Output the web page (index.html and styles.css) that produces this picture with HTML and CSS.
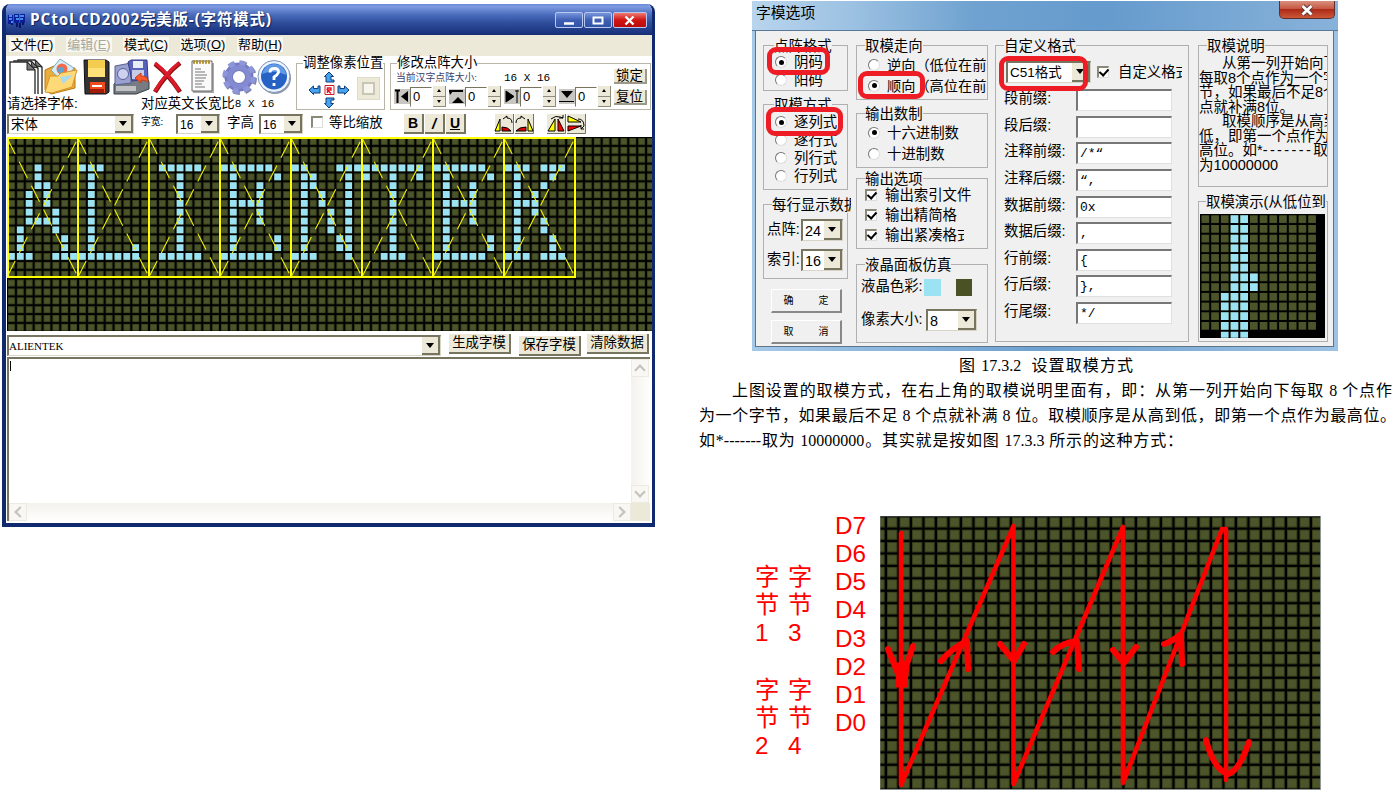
FILE: index.html
```html
<!DOCTYPE html>
<html lang="zh-CN">
<head>
<meta charset="utf-8">
<title>PCtoLCD2002 字模设置</title>
<link rel="stylesheet" href="styles.css">
</head>
<body>
<main class="page">

<section class="app">
  <header class="app-title">
    <svg class="app-logo" width="18" height="16" viewBox="0 0 18 16"><path d="M0 3h5v9H0zM6 2h5v9H6zM12 2h5v9h-5z" fill="#0a1f9c"/><path d="M1 4h3M1 7h3M3 10h2M7 4h3M8 7h3M12 4h4M12 7h3" stroke="#5fb0ff" stroke-width="1.3"/><path d="M3 12h2M9 11v4M12 11v5M15 10v3" stroke="#0b1566" stroke-width="2"/></svg>
    <h1>PCtoLCD2002完美版-(字符模式)</h1>
    <div class="caption-buttons">
      <span class="cap"><svg width="28" height="15" viewBox="0 0 28 15"><path d="M9 10.5h10" stroke="#fff" stroke-width="2.4"/></svg></span>
      <span class="cap"><svg width="28" height="15" viewBox="0 0 28 15"><path d="M9.5 4.5h9v6h-9z" fill="none" stroke="#fff" stroke-width="2"/></svg></span>
      <span class="cap cap-close"><svg width="33" height="15" viewBox="0 0 33 15"><path d="M12.500 3.500l8 8M20.500 3.500l-8 8" stroke="#fff" stroke-width="2.4"/></svg></span>
    </div>
  </header>
  <nav class="menu">
    <span>文件(<u>F</u>)</span><span class="off">编辑(<u>E</u>)</span><span>模式(<u>C</u>)</span><span>选项(<u>O</u>)</span><span>帮助(<u>H</u>)</span>
  </nav>

  <div class="toolbar">
    <div class="upper">
      <div class="left-tools">
        <div class="icons">
          <svg class="i-docs" width="34" height="38" viewBox="0 0 34 38"><g fill="#fff" stroke="#333" stroke-width="1.400"><path d="M9 36V2h17l7 7v27"/><path d="M5 36V3h17l7 7v26"/><path d="M1 36V4h17l8 8v24"/></g><path d="M18 4v8h8zM22 3l1 6 6 1zM26 2l1 6 6 1z" fill="#777" stroke="#222"/></svg>
          <svg class="i-folder" width="36" height="38" viewBox="0 0 36 38"><path d="M2 12l9-4 3 4 18-2v20L8 36 2 32z" fill="#e9ad3b" stroke="#b87813"/><path d="M17 1l14 9-11 15L8 12z" fill="#d6edf7" stroke="#82a9b8"/><circle cx="19" cy="11" r="5.500" fill="#f26b4d"/><circle cx="18" cy="12" r="3" fill="#58a6d4"/><path d="M2 34L7 18h8l3-3 16-3-5 17-20 6z" fill="#ffd977" stroke="#d5972a"/><path d="M17 19l13-2-10 9z" fill="#a9dbed"/></svg>
          <svg class="i-floppy" width="27" height="38" viewBox="0 0 27 38"><path d="M1 2h22l3 2v30l-3 2H2z" fill="#333" stroke="#111"/><path d="M5 2h17v17H5z" fill="#f4cd4e"/><path d="M5 10h17v9H5z" fill="#ffe17a"/><path d="M7 24h15v11H7z" fill="#f04a1f"/><path d="M9 27h10v2H9z" fill="#fff"/><path d="M7 31h14v4H7z" fill="#a31b08"/></svg>
          <svg class="i-drive" width="37" height="38" viewBox="0 0 37 38"><path d="M1 26l7-7h26l2 5v7l-13 5H1z" fill="#777b82" stroke="#363a42"/><path d="M2 8l16-3v20L2 27z" fill="#9aa1ce" stroke="#596090"/><circle cx="10" cy="16" r="5.500" fill="#cdd1ed" stroke="#5b619e"/><path d="M15 4l3-2h16l1 19-16 2z" fill="#5963bc" stroke="#353d89"/><path d="M20 3h10v7H20z" fill="#e8ecf7"/><path d="M19 12h12v9H19z" fill="#c7cbe7"/><path d="M3 28h20v5H3z" fill="#c0c2c3"/><path d="M35 24c0-5-3-6-7-6v-3l-6 5 6 5v-3q4 0 7 2" fill="#ff5a2d" stroke="#c33c18"/></svg>
          <svg class="i-x" width="31" height="38" viewBox="0 0 31 38"><path d="M3 6Q17 17 28 34M28 5Q14 16 3 34" fill="none" stroke="#8f1010" stroke-width="4.600"/><path d="M3 5Q17 16 27 33M27 5Q13 16 3 33" fill="none" stroke="#dd1a2b" stroke-width="3.400"/></svg>
          <svg class="i-note" width="24" height="38" viewBox="0 0 24 38"><path d="M2 5h21v30H2z" fill="#aaa"/><path d="M1 3h20v30H1z" fill="#fafafa" stroke="#666"/><path d="M2 4h18" stroke="#b28f31" stroke-width="3.500" stroke-dasharray="2 1"/><path d="M4 11h6M4 14h10M4 17h12M4 20h11M4 23h9M4 26h7M4 29h10" stroke="#777"/></svg>
          <svg class="i-gear" width="36" height="38" viewBox="0 0 36 38"><g transform="translate(18 19)"><circle cx="1" cy="1" r="13.500" fill="none" stroke="#8185a4" stroke-width="7" stroke-dasharray="5.600 5"/><circle r="10.300" fill="none" stroke="#747ac2" stroke-width="8.500"/><circle r="13" fill="none" stroke="#8e96da" stroke-width="7.500" stroke-dasharray="5.600 4.610"/><circle r="9.500" fill="none" stroke="#858bd0" stroke-width="5"/></g></svg>
          <svg class="i-help" width="35" height="38" viewBox="0 0 35 38"><circle cx="18" cy="20" r="16" fill="#8d96a7"/><circle cx="17" cy="18.500" r="16" fill="#eef4ff" stroke="#7e95bc"/><circle cx="17" cy="18.500" r="13" fill="#2562c4"/><path d="M5 16Q8 5 18 6t11 11Q17 11 5 16" fill="#6299e4"/><path d="M13 14.500q0-4 4.500-4t4 4q-1 2.500-4.500 4.500v3M17 25v3" fill="none" stroke="#fff" stroke-width="2.800"/></svg>
        </div>
        <div class="labels"><span class="lab-font">请选择字体:</span><span>对应英文长宽比</span><span class="mono">8 X 16</span></div>
      </div>

      <div class="group shift">
        <div class="legend">调整像素位置</div>
        <div class="shift-row">
          <svg width="42" height="38" viewBox="0 0 42 38"><g fill="#46a3ee" stroke="#113c79"><path d="M21 1l4.500 4.500H23V9h3v2h-8V5.500h-1.500z"/><path d="M1 19l4.500-4v2.500H10V15h2v7H5.500v1.500z"/><path d="M41 19l-4.500-4v2.500H32V15h-2v7h6.500v1.500z"/><path d="M21 37l4.500-4.500H23V29h3v-2h-8v5.500h-1.500z"/></g><path d="M17 14.500h9v9h-9z" fill="#fff" stroke="#cc1c24"/><path d="M19.500 22v-5h3.500v2h-3.500l3.500 3.500" fill="none" stroke="#e31525" stroke-width="1.400"/></svg>
          <span class="pad"><i></i></span>
        </div>
      </div>

      <div class="group resize">
        <div class="legend">修改点阵大小</div>
        <div class="resize-body">
          <div class="resize-left">
            <div class="size-info"><span class="tiny">当前汉字点阵大小:</span><span class="mono">16 X 16</span></div>
            <div class="steppers">
              <div class="step"><svg width="16" height="15" viewBox="0 0 16 15"><path d="M0 0h16v15H0z" fill="#c8c6c0"/><path d="M1 1.500h5M3.500 1v13" stroke="#000" stroke-width="2"/><path d="M14 2v11L7 7.500z"/></svg><b>0</b><em class="spin"><i></i><i></i></em></div>
              <div class="step"><svg width="16" height="15" viewBox="0 0 16 15"><path d="M0 0h16v15H0z" fill="#c8c6c0"/><path d="M0 2h14" stroke="#000" stroke-width="2"/><path d="M3 14h12L9 8zM0 2h4L1 6z"/></svg><b>0</b><em class="spin"><i></i><i></i></em></div>
              <div class="step"><svg width="16" height="15" viewBox="0 0 16 15"><path d="M0 0h16v15H0z" fill="#c8c6c0"/><path d="M2 2v11l8-5.500zM11 2h4M13 1v13" stroke="#000"/></svg><b>0</b><em class="spin"><i></i><i></i></em></div>
              <div class="step"><svg width="16" height="15" viewBox="0 0 16 15"><path d="M0 0h16v15H0z" fill="#c8c6c0"/><path d="M2 2h12L8 9z"/><path d="M0 12.500h15" stroke="#000"/></svg><b>0</b><em class="spin"><i></i><i></i></em></div>
            </div>
          </div>
          <div class="resize-btns"><span class="btn">锁定</span><span class="btn">复位</span></div>
        </div>
      </div>
    </div>

    <div class="lower">
      <span class="combo font-combo"><span>宋体</span><i class="drop"></i></span>
      <span class="tiny dark w-lab">字宽:</span>
      <span class="combo num-combo"><span>16</span><i class="drop"></i></span>
      <span class="h-lab">字高</span>
      <span class="combo num-combo"><span>16</span><i class="drop"></i></span>
      <span class="check"></span>
      <span class="scale-lab">等比缩放</span>
      <span class="btn sq bold">B</span><span class="btn sq ital">/</span><span class="btn sq under">U</span>
      <svg class="flip" width="92" height="20" viewBox="0 0 92 20">
        <path d="M0 0h92v20H0z" fill="#fff"/><path d="M1 0h18v19H1zM21 0h18v19H21zM53 0h18v19H53zM73 0h18v19H73z" fill="#ece9d8"/>
        <path d="M19.500 0v19.500H1M39.500 0v19.500H21M71.500 0v19.500H53M91.500 0v19.500H73" fill="none" stroke="#77745f"/>
        <g stroke="#000"><path d="M1 17L6 5v12z" fill="#ff0"/><path d="M8 13q6 0 9 4H8z" fill="#d00"/><path d="M9 5l4-3v2q5 0 5 5" fill="none"/>
        <path d="M39 17L34 5v12z" fill="#ff0"/><path d="M32 13q-7 0-10 4h10z" fill="#d00"/><path d="M31 5l-4-3v2q-5 0-5 5" fill="none"/>
        <path d="M54 17l7-12v12z" fill="#ff0"/><path d="M64 5v12h6z" fill="#f00"/><path d="M57 5q5-4 9-2l3 1M69 1v3h-4" fill="none"/>
        <path d="M74 2v6h13z" fill="#ff0"/><path d="M74 17l13-5H74z" fill="#f00"/><path d="M84 5q6 0 6 7l-3 3M90 15h-3v-4" fill="none"/></g>
      </svg>
    </div>
  </div>

  <svg class="matrix" width="645" height="194" viewBox="0 0 645 194">
    <defs><pattern id="dots" x="1" y="1" width="8.875" height="8.850" patternUnits="userSpaceOnUse"><path d="M0 0h8.875v8.850H0z" fill="#000"/><path d="M0 0h7v7H0z" fill="#353d1b"/><path d="M.8.800h5.400v5.400H.8z" fill="#4c552a"/></pattern></defs>
    <path d="M0 0h645v194H0z" fill="url(#dots)"/>
    <path id="glyph-pixels" fill="#9be2f2"/>
    <path id="glyph-diagonals" fill="none" stroke="#f0f000" stroke-width="1.100" stroke-dasharray="18 8.800"/>
    <path id="glyph-frames" fill="none" stroke="#ff0" stroke-width="2"/>
  </svg>

  <div class="entry">
    <span class="combo text-combo"><span class="entry-text">ALIENTEK</span><i class="drop"></i></span>
    <span class="btn gen">生成字模</span><span class="btn save">保存字模</span><span class="btn clear">清除数据</span>
  </div>
  <div class="output">
    <div class="output-text"><span class="caret"></span></div>
    <div class="vbar"><span class="sb up"></span><span class="sb down"></span></div>
    <div class="hbar"><span class="sb prev"></span><span class="sb next"></span></div>
    <div class="corner"></div>
  </div>
</section>

<section class="doc">
  <div class="dialog">
    <header class="dlg-title"><h2>字模选项</h2><span class="dlg-close"><svg width="14" height="12" viewBox="0 0 14 12"><path d="M2.500 2l9 8.500M11.500 2l-9 8.500" stroke="#5b3a3a" stroke-width="4.600"/><path d="M2.500 2l9 8.500M11.500 2l-9 8.500" stroke="#fff" stroke-width="2.800"/></svg></span></header>
    <div class="dlg-body">
      <div class="col c1">
        <div class="group g-format"><div class="legend">点阵格式</div>
          <label><i class="radio on"></i>阴码</label><label><i class="radio"></i>阳码</label><span class="mark m1"></span></div>
        <div class="group g-mode"><div class="legend">取模方式</div>
          <label><i class="radio on"></i>逐列式</label><label><i class="radio"></i>逐行式</label><label><i class="radio"></i>列行式</label><label><i class="radio"></i>行列式</label><span class="mark m2"></span></div>
        <div class="group g-line"><div class="legend">每行显示数据</div>
          <div class="pair"><span>点阵:</span><span class="combo"><span>24</span><i class="drop"></i></span></div>
          <div class="pair"><span>索引:</span><span class="combo"><span>16</span><i class="drop"></i></span></div></div>
        <div class="dbtn">确<span>定</span></div>
        <div class="dbtn">取<span>消</span></div>
      </div>
      <div class="col c2">
        <div class="group g-dir"><div class="legend">取模走向</div>
          <label><i class="radio"></i>逆向（低位在前</label><label><i class="radio on"></i>顺向（高位在前</label><span class="mark m3"></span></div>
        <div class="group g-base"><div class="legend">输出数制</div>
          <label><i class="radio on"></i>十六进制数</label><label><i class="radio"></i>十进制数</label></div>
        <div class="group g-opt"><div class="legend">输出选项</div>
          <label><i class="check on"></i>输出索引文件</label><label><i class="check on"></i>输出精简格</label><label><i class="check on"></i><span class="clip">输出紧凑格式</span></label></div>
        <div class="group g-lcd"><div class="legend">液晶面板仿真</div>
          <div class="lcd-row"><span>液晶色彩:</span><i class="swatch sky"></i><i class="swatch olive"></i></div>
          <div class="lcd-row"><span>像素大小:</span><span class="combo"><span>8</span><i class="drop"></i></span></div></div>
      </div>
      <div class="col c3">
        <div class="group g-custom"><div class="legend">自定义格式</div>
          <div class="custom-top"><span class="combo"><span>C51格式</span><i class="drop"></i></span><i class="check on"></i><span class="clip">自定义格式</span></div>
          <div class="field"><span>段前缀:</span><b></b></div>
          <div class="field"><span>段后缀:</span><b></b></div>
          <div class="field"><span>注释前缀:</span><b>/*“</b></div>
          <div class="field"><span>注释后缀:</span><b>“,</b></div>
          <div class="field"><span>数据前缀:</span><b>0x</b></div>
          <div class="field"><span>数据后缀:</span><b>,</b></div>
          <div class="field"><span>行前缀:</span><b>{</b></div>
          <div class="field"><span>行后缀:</span><b>},</b></div>
          <div class="field"><span>行尾缀:</span><b>*/</b></div>
          <span class="mark m4"></span></div>
      </div>
      <div class="col c4">
        <div class="group g-help"><div class="legend">取模说明</div>
          <div class="help">
            <p class="ind">从第一列开始向下</p><p>每取8个点作为一个字</p><p>节，如果最后不足8个</p><p>点就补满8位。</p><p class="ind">取模顺序是从高到</p><p>低，即第一个点作为</p><p>高位。如*<span class="dashes">-------</span>取</p><p>为10000000</p>
          </div></div>
        <div class="group g-demo"><div class="legend">取模演示(从低位到</div>
          <svg width="125" height="124" viewBox="0 0 125 124">
            <defs><pattern id="demo-dots" x="1.500" y="1.300" width="9.700" height="9.700" patternUnits="userSpaceOnUse"><path d="M0 0h7.700v7.700H0z" fill="#4c552a"/></pattern></defs>
            <path d="M0 0h125v124H0z" fill="#000"/><path d="M1 1h115v115H1z" fill="url(#demo-dots)"/><path id="demo-pixels" fill="#9be2f2"/></svg></div>
      </div>
    </div>
  </div>

  <p class="fig-title">图 17.3.2 &nbsp;设置取模方式</p>
  <p class="ln l1">上图设置的取模方式，在右上角的取模说明里面有，即：从第一列开始向下每取 8 个点作</p>
  <p class="ln l2">为一个字节，如果最后不足 8 个点就补满 8 位。取模顺序是从高到低，即第一个点作为最高位。</p>
  <p class="ln l3">如*-------取为 10000000。其实就是按如图 17.3.3 所示的这种方式：</p>

  <div class="scan">
    <div class="bytes">
      <div>字<br>节<br>1</div><div>字<br>节<br>3</div>
      <div>字<br>节<br>2</div><div>字<br>节<br>4</div>
    </div>
    <div class="bits">D7<br>D6<br>D5<br>D4<br>D3<br>D2<br>D1<br>D0</div>
    <svg class="scan-grid" width="441" height="274" viewBox="880 516 441 274">
      <defs><pattern id="scan-dots" x="887" y="517.200" width="12.500" height="12.430" patternUnits="userSpaceOnUse"><path d="M0 0h12.500v12.430H0z" fill="#000"/><path d="M0 0h10.300v10.300H0z" fill="#353d1b"/><path d="M1 1h8.300v8.300H1z" fill="#4c552a"/></pattern></defs>
      <path d="M880 516h440.500v273.500H880z" fill="url(#scan-dots)" stroke="#8c9494" stroke-width=".8"/>
      <g fill="none" stroke="#f00" stroke-linecap="round" stroke-linejoin="round">
        <path stroke-width="4.600" d="M901 533V785L1013.500 526V784L1123 527V783L1222 529H1226V780"/>
        <path stroke-width="6" d="M888 649L901 681L913 646M941 661Q952 648 967 641L968 669M1000 644L1014 661L1024 644M1053 652Q1061 643 1077 641L1079 669M1113 650L1124 663L1136 647M1164 644Q1173 641 1181 634L1182 664M1206 740Q1214 770 1228 774Q1239 771 1249 742"/>
        <path stroke-width="7" d="M902 664V683M898 666L904 683L906 664"/>
      </g>
      <path d="M895.500 672h12.500v15.500h-12z" fill="#f00"/>
    </svg>
  </div>
</section>
</main>
<script src="script.js"></script>
</body>
</html>
```
FILE: styles.css
```css
* { box-sizing: border-box; }
body { margin: 0; background: #fff; color: #000; overflow: hidden; font-family: "Liberation Sans", "Noto Sans CJK SC", sans-serif; }
h1, h2, p { margin: 0; font-weight: normal; }
i, em { font-style: normal; }
svg { display: block; flex: none; }
.page { display: grid; grid-template-columns: 655px 695px; column-gap: 44px; width: 1394px; height: 799px; overflow: hidden; align-items: start; }
.mono { font-family: "Liberation Mono", "Noto Sans CJK SC", monospace; font-size: 11px; }
.tiny { font-size: 9.8px; color: #3d4166; }
.dark { color: #000; }

/* Character-mode window */
.app { width: 653px; height: 523px; margin: 4px 0 0 2px; border: solid #10296f; border-width: 0 3px 4px 4px; border-radius: 8px 8px 0 0; background: #fff; font-size: 13.400px; line-height: 14px; white-space: nowrap; overflow: hidden; }
.app-title { display: flex; align-items: center; height: 31px; margin: 0 -3px 0 -4px; padding: 0 8px 0 6px; background: linear-gradient(#6787d6 0, #7d9ae2 8%, #4a6cbb 35%, #2f4f9d 60%, #1b3480 92%, #172c70); }
.app-title h1 { width: 260px; margin-left: 4px; color: #fff; font: bold 15.400px/20px "Open Sans", "Noto Sans CJK SC", sans-serif; letter-spacing: .850px; text-shadow: 1px 1px 1px #132458; }
.caption-buttons { display: flex; gap: 1px; margin-left: auto; }
.cap { height: 16px; width: 28px; border: 1px solid #b8c8f0; border-radius: 2px; background: linear-gradient(#7896dd, #3e5fb4 50%, #3153a6); }
.cap svg { margin-left: -1px; }
.cap-close { width: 34px; background: linear-gradient(#f07a70, #cf1512 50%, #b90b0b); }
.menu { display: flex; gap: 11px; align-items: center; height: 21px; padding: 0 0 2px 3px; background: #ece9d8; font-size: 13px; line-height: 15px; }
.menu span { width: 46px; text-align: center; background: #f8f7f1; letter-spacing: 0; }
.menu .off { color: #aaa79b; }
.toolbar { height: 81px; padding-left: 1px; }
.upper { display: flex; height: 56px; }
.left-tools { width: 289px; }
.icons { display: flex; height: 40px; padding: 2px 0 0 2px; }
.i-floppy { margin-left: 4px; }
.i-drive { margin-left: 3px; }
.i-x { margin-left: 2px; }
.i-note { margin-left: 8px; }
.i-gear { margin-left: 6px; }
.labels { display: flex; align-items: center; height: 15px; }
.lab-font { width: 134px; }
.group { border: 1px solid #b9b6a8; position: relative; }
.legend { width: fit-content; background: #fff; white-space: nowrap; }
.shift { width: 89px; height: 47px; margin-top: 7px; }
.shift .legend, .resize .legend { margin: -8px 0 0 6px; }
.shift-row { display: flex; align-items: center; gap: 7px; margin: 1px 0 0 11px; }
.pad { display: grid; place-items: center; width: 23px; height: 23px; margin-top: -4px; background: #ece9d8; border: 1px solid #dedbc9; }
.pad i { width: 13px; height: 13px; border: 2px solid #c9c6b4; background: #f7f6ee; }
.resize { width: 261px; height: 47px; margin: 7px 0 0 5px; }
.resize-body { display: flex; }
.resize-left { width: 223px; padding-left: 3px; }
.size-info { display: flex; align-items: center; height: 16px; }
.size-info .tiny { width: 110px; padding-left: 2px; }
.steppers { display: flex; gap: 2px; height: 21px; align-items: center; }
.step { display: flex; align-items: center; width: 53px; height: 20px; }
.step b { width: 22px; height: 20px; border: 1px solid #aaa79b; border-color: #77745f #fff #fff #77745f; padding-left: 2px; font: 13px/18px "Liberation Sans", sans-serif; }
.spin { display: grid; grid-template-rows: 1fr 1fr; width: 13px; height: 21px; margin-left: 1px; }
.spin i { display: grid; place-items: center; background: #ece9d8; border: solid #8f8c7c; border-width: 0 1px 1px 0; }
.spin i::before { content: ""; border: 2.500px solid transparent; border-top: 0; border-bottom: 3px solid #000; }
.spin i + i::before { border-bottom: 0; border-top: 3px solid #000; }
.btn { display: inline-block; background: #ece9d8; border: solid #77745f; border-width: 0 2px 2px 0; text-align: center; }
.resize-btns { display: flex; flex-direction: column; gap: 6px; width: 33px; margin-top: -1px; }
.resize-btns .btn { height: 15px; line-height: 13px; border-color: #9c9988; }
.lower { display: flex; align-items: center; height: 24px; }
.combo { display: flex; align-items: center; justify-content: space-between; border: solid; border-width: 2px 1px 1px 2px; border-color: #77745f #d8d5c6 #d8d5c6 #77745f; background: #fff; flex: none; }
.combo > span { padding-left: 2px; }
.drop { display: grid; place-items: center; align-self: stretch; width: 18px; background: #ece9d8; border: solid #77745f; border-width: 0 2px 2px 0; }
.drop::before { content: ""; border: 4.500px solid transparent; border-bottom: 0; border-top: 5px solid #000; }
.font-combo { width: 127px; height: 20px; }
.w-lab { width: 42px; padding-left: 7px; margin-top: -5px; }
.num-combo { width: 44px; height: 20px; font-size: 12px; }
.h-lab { width: 39px; padding-left: 7px; margin-top: -3px; }
.lower .check { margin: -5px 0 0 8px; }
.check { position: relative; flex: none; width: 12px; height: 12px; background: #fff; border: solid; border-width: 2px 1px 1px 2px; border-color: #8b8878 #ddd #ddd #8b8878; }
.check.on::after { content: ""; position: absolute; left: 2px; top: -1px; width: 4px; height: 7px; border: solid #000; border-width: 0 2px 2px 0; transform: rotate(42deg); }
.scale-lab { width: 75px; margin: -3px 0 0 6px; }
.sq { width: 20px; height: 20px; margin-right: 1px; font: bold 15px/19px "Liberation Sans", sans-serif; }
.bold { font-size: 14px; }
.ital { font-style: italic; }
.under { text-decoration: underline; font-size: 14px; }
.flip { margin-left: 27px; }
.matrix { margin-left: 1px; }
.entry { display: flex; height: 26px; padding: 3px 0 0 1px; align-items: flex-start; }
.text-combo { width: 434px; height: 21px; margin-top: 1px; }
.text-combo .entry-text { padding-left: 0; font: 11px/14px "Liberation Serif", serif; }
.entry .btn { width: 62px; height: 20px; line-height: 17px; }
.gen { margin-left: 8px; }
.save { margin: 2px 0 0 8px; }
.clear { margin-left: 6px; }
.output { display: grid; grid-template: 144px 18px / 1fr 19px; margin: 0 2px 0 1px; border: solid #77745f; border-width: 2px 0 0 2px; }
.caret { display: block; width: 1px; height: 10px; margin: 2px 0 0 1px; background: #000; }
.vbar, .hbar { display: flex; justify-content: space-between; }
.vbar { flex-direction: column; background: linear-gradient(90deg, #f3f2ed, #fefefd); }
.hbar { background: linear-gradient(#f3f2ed, #fefefd); }
.corner { background: #ece9d8; }
.sb { display: grid; place-items: center; width: 18px; height: 18px; border: 1px solid #eceae1; background: #f8f7f3; }
.sb::before { content: ""; width: 6px; height: 6px; border: solid #c4c2b9; border-width: 2px 0 0 2px; }
.up::before { transform: translateY(2px) rotate(45deg); }
.down::before { transform: translateY(-2px) rotate(225deg); }
.prev::before { transform: translateX(2px) rotate(-45deg); }
.next::before { transform: translateX(-2px) rotate(135deg); }

/* Option dialog */
.dialog { width: 586px; height: 350px; margin: 1px 0 0 53px; padding: 0 4px 4px; background: linear-gradient(90deg, #a5c9e9, #6da0d0 50%, #9cc2e4); font-size: 14.400px; line-height: 16px; white-space: nowrap; }
.dlg-title { display: flex; justify-content: space-between; height: 30px; margin: 0 -4px; padding: 0 3px 0 4px; background: linear-gradient(90deg, #b9d5ed 0, #9cc1e2 17%, #6fa2d0 38%, #659bcd 60%, #88b2da); border-bottom: 1px solid #577896; }
.dlg-title h2 { font-size: 14.800px; line-height: 25px; }
.dlg-close { display: grid; place-items: center; width: 56px; height: 18px; border: 1px solid #5e3030; border-top: 0; border-radius: 0 0 5px 5px; background: linear-gradient(#d9917f, #c65843 45%, #ad2b18 50%, #cc5738); }
.dlg-body { display: flex; height: 316px; padding: 14px 0 0 7px; background: #f0f0f0; border: solid #5d7588; border-width: 0 1px 1px; margin-left: -1px; }
.dialog .legend { background: #f0f0f0; margin: -8px 0 0 8px; }
.dialog .group { border-color: #b0b0b0; overflow: visible; }
.c1 { width: 85px; }
.c2 { width: 132px; margin-left: 8px; }
.c3 { width: 194px; margin-left: 7px; }
.c4 { width: 130px; margin-left: 9px; }
label { display: flex; align-items: center; }
.radio { display: grid; place-items: center; flex: none; width: 12px; height: 12px; border-radius: 50%; background: #fff; border: 1px solid; border-color: #777 #ddd #ddd #777; }
.radio.on::before { content: ""; width: 5px; height: 5px; border-radius: 50%; background: #000; }
.c1 label { padding-left: 11px; gap: 7px; height: 18px; }
.g-format { height: 46px; }
.g-format label { position: relative; top: -1px; }
.g-mode { height: 86px; margin-top: 13px; }
.g-line { height: 75px; margin-top: 14px; }
.g-line .legend { width: 79px; overflow: hidden; }
.pair { display: flex; align-items: center; height: 30px; padding-left: 3px; }
.pair > span:first-child { width: 34px; margin-top: -3px; }
.pair .combo { width: 42px; height: 22px; }
.g-line .legend + .pair { margin-top: 2px; }
.g-mode .legend, .g-format .legend { margin-left: 10px; }
.dbtn { display: flex; justify-content: center; gap: 25px; width: 71px; height: 24px; margin: 10px 0 0 8px; font-size: 10px; line-height: 22px; background: #f0f0f0; border: solid; border-width: 1px 2px 2px 1px; border-color: #fff #888 #888 #fff; }
.dbtn + .dbtn { margin-top: 7px; }
.c2 label { padding-left: 11px; gap: 7px; }
.g-dir { height: 55px; }
.g-dir label { height: 21px; }
.g-dir label { font-size: 14.200px; }
.g-base { height: 55px; margin-top: 13px; }
.g-base label { height: 21px; }
.g-opt { height: 71px; margin-top: 10px; }
.c2 .g-opt label { padding-left: 8px; gap: 8px; height: 20px; }
.g-opt .legend { margin-bottom: -2px; }
.g-opt .clip { width: 79px; overflow: hidden; }
.g-lcd { height: 79px; margin-top: 15px; }
.g-lcd .legend { margin-bottom: -2px; }
.lcd-row { display: flex; align-items: center; height: 32px; padding-left: 4px; }
.lcd-row + .lcd-row { height: 34px; }
.lcd-row > span:first-child { width: 65px; margin-top: -2px; }
.lcd-row .combo { width: 51px; height: 22px; }
.swatch { width: 17px; height: 17px; margin-right: 15px; }
.sky { background: #9be2f2; }
.olive { background: #4a5124; }
.g-custom { height: 297px; }
.custom-top { display: flex; align-items: center; height: 30px; margin-top: 3px; padding-left: 10px; }
.custom-top .combo { width: 85px; height: 22px; font-size: 13.500px; }
.custom-top .check { margin: 0 9px 0 6px; }
.custom-top .clip { width: 64px; overflow: hidden; }
.field { display: flex; align-items: center; height: 26.600px; padding-left: 8px; }
.field span { width: 72px; margin-top: -4px; }
.field b { width: 96px; height: 22px; padding-left: 2px; background: #fff; border: solid; border-width: 2px 1px 1px 2px; border-color: #777 #e0e0e0 #e0e0e0 #777; font: 13px/20px "Liberation Mono", monospace; }
.g-help { height: 142px; }
.help { height: 125px; overflow: hidden; line-height: 14.500px; font-size: 14.500px; margin-top: 2px; }
.ind { padding-left: 23px; }
.dashes { letter-spacing: 2.400px; }
.g-demo { height: 141px; margin-top: 14px; }
.g-demo .legend { margin-left: 7px; }
.g-demo svg { margin: 4px 0 0 1px; }
/* Hand-drawn emphasis rings lie over the controls */
.mark { position: absolute; border: 5px solid #ee1c24; border-radius: 9px; }
.m1 { left: 3px; top: 1px; width: 63px; height: 28px; }
.m2 { left: 2px; top: 2px; width: 77px; height: 29px; }
.m3 { left: 1px; top: 25px; width: 67px; height: 28px; }
.m4 { left: 3px; top: 10px; width: 89px; height: 35px; }

/* Document text */
.fig-title { width: 174px; margin: 2px 0 0 260px; white-space: nowrap; }
.fig-title, .ln { font: 16px/25px "Liberation Serif", "Noto Sans CJK SC", serif; text-align-last: justify; white-space: nowrap; }
.l1 { width: 660px; margin-left: 33px; }
.l2 { width: 697px; }
.l3 { width: 484px; }
.scan { display: flex; height: 274px; margin: 63px 0 0 56px; color: #f00; font: 24.300px/28.150px "Liberation Sans", "Noto Sans CJK SC", sans-serif; }
.bytes { display: grid; grid-template: 112.500px 112.500px / 33px 47px; height: 225px; margin-top: 47px; }
.bits { width: 45px; margin-top: -4px; white-space: nowrap; }
```
FILE: script.js
```js
// 8x16 glyph rows 3..13, one byte per row, most significant bit on the left
const letters = {
  A: [0x10, 0x10, 0x18, 0x28, 0x28, 0x24, 0x3c, 0x44, 0x42, 0x42, 0xe7],
  L: [0xe0, 0x40, 0x40, 0x40, 0x40, 0x40, 0x40, 0x40, 0x40, 0x42, 0xfe],
  I: [0x7c, 0x10, 0x10, 0x10, 0x10, 0x10, 0x10, 0x10, 0x10, 0x10, 0x7c],
  E: [0xfc, 0x42, 0x48, 0x48, 0x78, 0x48, 0x48, 0x40, 0x42, 0x42, 0xfc],
  N: [0xc7, 0x62, 0x62, 0x52, 0x52, 0x4a, 0x4a, 0x4a, 0x46, 0x46, 0xe2],
  T: [0xfe, 0x92, 0x10, 0x10, 0x10, 0x10, 0x10, 0x10, 0x10, 0x10, 0x38],
  K: [0xee, 0x44, 0x48, 0x50, 0x70, 0x50, 0x48, 0x48, 0x44, 0x44, 0xee]
};
let pixels = "", frames = "M0 1H569M0 140H569M1 1V140", diagonals = "";
[..."ALIENTEK"].forEach((ch, g) => {
  letters[ch].forEach((bits, r) => {
    for (let c = 0; c < 8; c++) {
      if (bits & (0x80 >> c)) pixels += `M${1 + (g * 8 + c) * 8.875} ${1 + (r + 3) * 8.85}h6.8v6.8h-6.8z`;
    }
  });
  const x = g * 71;
  frames += `M${x + 71} 0V141`;
  diagonals += `M${x} 1L${x + 71} 140M${x} 140L${x + 71} 1`;
});
document.getElementById("glyph-pixels").setAttribute("d", pixels);
document.getElementById("glyph-frames").setAttribute("d", frames);
document.getElementById("glyph-diagonals").setAttribute("d", diagonals);

// Magnified sample: lit columns for each row
let demo = "";
for (let r = 0; r < 13; r++) {
  const cols = r < 6 ? [3, 4] : r < 8 ? [3, 4, 5] : [2, 3, 4];
  cols.forEach(c => { demo += `M${1.5 + c * 9.7} ${1.3 + r * 9.7}h7.7v${r === 12 ? 6 : 7.7}h-7.7z`; });
}
document.getElementById("demo-pixels").setAttribute("d", demo);
```
